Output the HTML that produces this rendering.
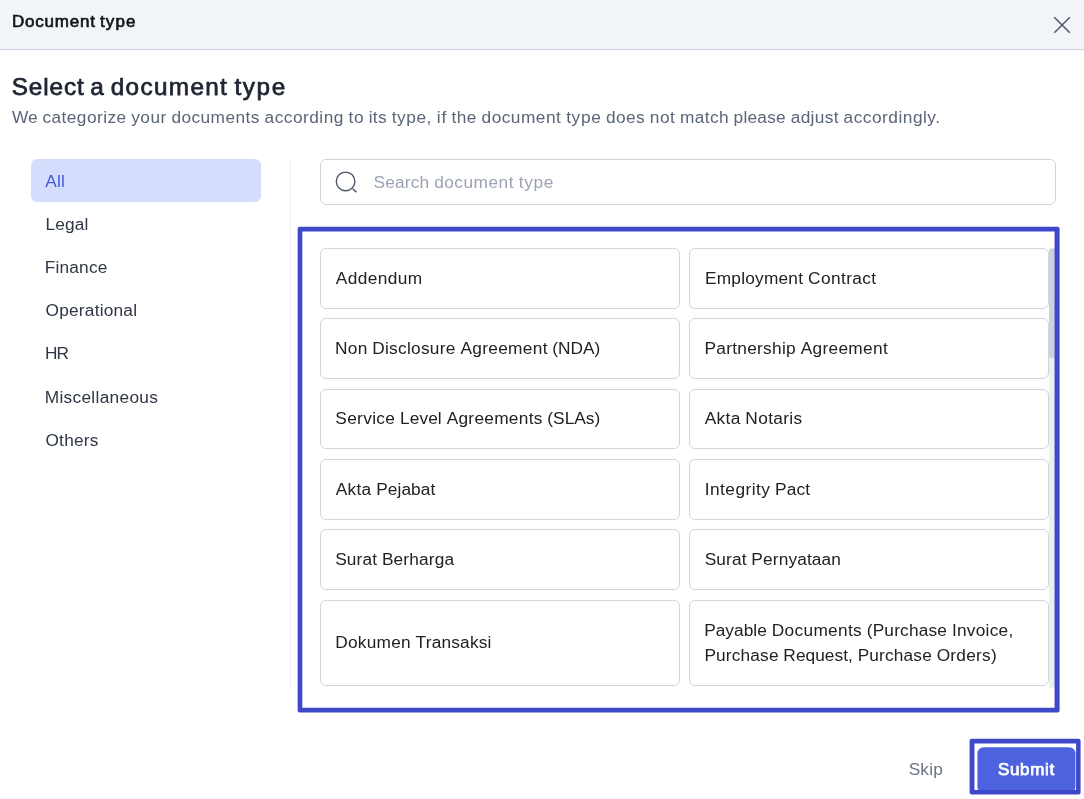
<!DOCTYPE html>
<html lang="en">
<head>
<meta charset="utf-8">
<title>Document type</title>
<style>
*{box-sizing:border-box;margin:0;padding:0}
html,body{width:1084px;height:799px;overflow:hidden;background:#fff}
body{position:relative;font-family:"Liberation Sans",sans-serif;font-size:16px;color:#2d3340}
.tx{position:absolute;left:0;width:1084px;height:24px;white-space:nowrap;line-height:24px;font-weight:400}
.tx span{position:absolute;top:0}
#root{position:absolute;left:0;top:0;width:1084px;height:799px;overflow:hidden;will-change:transform;background:#fff}
#hdr{position:absolute;left:0;top:0;width:1084px;height:50px;background:#f1f4f9;border-bottom:1px solid #cbd3df}
#close{position:absolute;left:1050px;top:13px;width:24px;height:24px}
#pill{position:absolute;left:31px;top:159px;width:230px;height:43px;border-radius:6px;background:#d5ddfc}
#vline{position:absolute;left:290px;top:159px;width:1px;height:530px;background:#eceff3}
#search{position:absolute;left:320px;top:159px;width:736px;height:46px;border:1px solid #ced5df;border-radius:6px;background:#fff}
#sicon{position:absolute;left:333px;top:169px}
.card{position:absolute;width:360px;border:1px solid #d0d6e0;border-radius:6px;background:#fff}
.c1{left:320px}.c2{left:689px}
.ov{position:absolute;left:0;top:0;pointer-events:none}
</style>
</head>
<body>
<div id="root">
<div id="hdr"></div>
<div class="tx" style="top:9.50px;font-size:17.0px;color:#151517;-webkit-text-stroke:0.65px #151517"><span style="left:12.02px;letter-spacing:0.768px">Document</span> <span style="left:100.04px;letter-spacing:1.105px">type</span></div>
<svg id="close" viewBox="0 0 24 24"><path d="M4.3 4.3 L19.8 19.7 M19.8 4.3 L4.3 19.7" stroke="#505a69" stroke-width="1.55" fill="none"/></svg>
<h1 class="tx" style="top:74.50px;font-size:24.3px;color:#1f2533;-webkit-text-stroke:0.75px #1f2533"><span style="left:11.71px;letter-spacing:0.891px">Select</span> <span style="left:90.35px;letter-spacing:0.297px">a</span> <span style="left:110.75px;letter-spacing:1.344px">document</span> <span style="left:234.40px;letter-spacing:1.613px">type</span></h1>
<p class="tx" style="top:105.00px;font-size:17.3px;color:#5a6577"><span style="left:11.99px;letter-spacing:-0.078px">We</span> <span style="left:42.45px;letter-spacing:0.436px">categorize</span> <span style="left:131.28px;letter-spacing:0.445px">your</span> <span style="left:171.42px;letter-spacing:0.432px">documents</span> <span style="left:264.61px;letter-spacing:0.479px">according</span> <span style="left:348.60px;letter-spacing:0.484px">to</span> <span style="left:368.64px;letter-spacing:0.323px">its</span> <span style="left:391.74px;letter-spacing:0.537px">type,</span> <span style="left:436.77px;letter-spacing:0.820px">if</span> <span style="left:451.57px;letter-spacing:0.391px">the</span> <span style="left:481.55px;letter-spacing:0.480px">document</span> <span style="left:566.13px;letter-spacing:0.660px">type</span> <span style="left:606.03px;letter-spacing:0.375px">does</span> <span style="left:649.80px;letter-spacing:0.479px">not</span> <span style="left:679.96px;letter-spacing:0.381px">match</span> <span style="left:733.59px;letter-spacing:0.237px">please</span> <span style="left:790.72px;letter-spacing:0.320px">adjust</span> <span style="left:843.59px;letter-spacing:0.499px">accordingly.</span></p>
<div id="pill"></div>
<div class="tx" style="top:169.00px;font-size:17.3px;color:#4459d8"><span style="left:45.32px;letter-spacing:0.167px">All</span></div>
<div class="tx" style="top:212.00px;font-size:17.3px;color:#2f3644"><span style="left:45.48px;letter-spacing:0.153px">Legal</span></div>
<div class="tx" style="top:255.00px;font-size:17.3px;color:#2f3644"><span style="left:44.87px;letter-spacing:0.158px">Finance</span></div>
<div class="tx" style="top:298.00px;font-size:17.3px;color:#2f3644"><span style="left:45.56px;letter-spacing:0.210px">Operational</span></div>
<div class="tx" style="top:341.00px;font-size:17.3px;color:#2f3644"><span style="left:44.88px;letter-spacing:-0.844px">HR</span></div>
<div class="tx" style="top:385.00px;font-size:17.3px;color:#2f3644"><span style="left:44.69px;letter-spacing:0.310px">Miscellaneous</span></div>
<div class="tx" style="top:428.00px;font-size:17.3px;color:#2f3644"><span style="left:45.45px;letter-spacing:0.224px">Others</span></div>
<div id="vline"></div>
<div id="search"></div>
<svg id="sicon" width="32" height="28" viewBox="0 0 32 28"><circle cx="12.6" cy="12.4" r="9.3" fill="none" stroke="#4b5565" stroke-width="1.4"/><path d="M19.7 19.8 L23.5 23.3" stroke="#4b5565" stroke-width="1.5" fill="none"/></svg>
<div class="tx" style="top:170.00px;font-size:17.3px;color:#9aa3b3"><span style="left:373.62px;letter-spacing:0.154px">Search</span> <span style="left:434.20px;letter-spacing:0.480px">document</span> <span style="left:518.78px;letter-spacing:0.660px">type</span></div>
<div class="card c1" style="top:248px;height:61px"></div><div class="card c2" style="top:248px;height:61px"></div><div class="card c1" style="top:318px;height:61px"></div><div class="card c2" style="top:318px;height:61px"></div><div class="card c1" style="top:389px;height:60px"></div><div class="card c2" style="top:389px;height:60px"></div><div class="card c1" style="top:459px;height:61px"></div><div class="card c2" style="top:459px;height:61px"></div><div class="card c1" style="top:529px;height:61px"></div><div class="card c2" style="top:529px;height:61px"></div><div class="card c1" style="top:600px;height:86px"></div><div class="card c2" style="top:600px;height:86px"></div>
<div class="tx" style="top:266.00px;font-size:17.3px;color:#222222"><span style="left:335.75px;letter-spacing:0.393px">Addendum</span></div><div class="tx" style="top:266.00px;font-size:17.3px;color:#222222"><span style="left:705.03px;letter-spacing:0.214px">Employment</span> <span style="left:808.04px;letter-spacing:0.404px">Contract</span></div><div class="tx" style="top:336.00px;font-size:17.3px;color:#222222"><span style="left:334.94px;letter-spacing:0.307px">Non</span> <span style="left:372.28px;letter-spacing:0.269px">Disclosure</span> <span style="left:460.40px;letter-spacing:0.314px">Agreement</span> <span style="left:552.35px;letter-spacing:0.000px">(NDA)</span></div><div class="tx" style="top:336.00px;font-size:17.3px;color:#222222"><span style="left:704.56px;letter-spacing:0.271px">Partnership</span> <span style="left:800.67px;letter-spacing:0.314px">Agreement</span></div><div class="tx" style="top:406.00px;font-size:17.3px;color:#222222"><span style="left:335.30px;letter-spacing:0.339px">Service</span> <span style="left:399.93px;letter-spacing:0.116px">Level</span> <span style="left:446.65px;letter-spacing:0.287px">Agreements</span> <span style="left:547.32px;letter-spacing:0.018px">(SLAs)</span></div><div class="tx" style="top:406.00px;font-size:17.3px;color:#222222"><span style="left:704.79px;letter-spacing:0.301px">Akta</span> <span style="left:745.35px;letter-spacing:0.350px">Notaris</span></div><div class="tx" style="top:477.00px;font-size:17.3px;color:#222222"><span style="left:335.73px;letter-spacing:0.301px">Akta</span> <span style="left:376.16px;letter-spacing:0.092px">Pejabat</span></div><div class="tx" style="top:477.00px;font-size:17.3px;color:#222222"><span style="left:704.73px;letter-spacing:0.470px">Integrity</span> <span style="left:775.03px;letter-spacing:0.156px">Pact</span></div><div class="tx" style="top:547.00px;font-size:17.3px;color:#222222"><span style="left:335.22px;letter-spacing:0.122px">Surat</span> <span style="left:381.90px;letter-spacing:0.170px">Berharga</span></div><div class="tx" style="top:547.00px;font-size:17.3px;color:#222222"><span style="left:704.68px;letter-spacing:0.122px">Surat</span> <span style="left:751.34px;letter-spacing:0.138px">Pernyataan</span></div><div class="tx" style="top:630.00px;font-size:17.3px;color:#222222"><span style="left:335.19px;letter-spacing:0.250px">Dokumen</span> <span style="left:415.62px;letter-spacing:0.188px">Transaksi</span></div><div class="tx" style="top:618.00px;font-size:17.3px;color:#222222"><span style="left:704.14px;letter-spacing:0.049px">Payable</span> <span style="left:771.81px;letter-spacing:0.318px">Documents</span> <span style="left:866.74px;letter-spacing:0.179px">(Purchase</span> <span style="left:951.89px;letter-spacing:0.258px">Invoice,</span></div><div class="tx" style="top:643.00px;font-size:17.3px;color:#222222"><span style="left:704.41px;letter-spacing:0.156px">Purchase</span> <span style="left:783.36px;letter-spacing:0.043px">Request,</span> <span style="left:857.66px;letter-spacing:0.156px">Purchase</span> <span style="left:936.70px;letter-spacing:0.237px">Orders)</span></div>
<svg class="ov" width="1084" height="799" viewBox="0 0 1084 799">
<path d="M1049 248.4 H1058 V688.2 H1051 Q1049 688.2 1049 686.2 Z" fill="#eceff2"/>
<rect x="1049" y="248.4" width="9" height="109.8" rx="3" fill="#cdd3dc"/>
<path fill-rule="evenodd" fill="#4048ca" d="M299.64 226.7 H1057.6 Q1059.6 226.7 1059.6 228.7 V710.46 Q1059.6 712.46 1057.6 712.46 H299.64 Q297.64 712.46 297.64 710.46 V228.7 Q297.64 226.7 299.64 226.7 Z M302.33 231.4 V707.65 H1054.55 V231.4 Z"/>
</svg>
<div class="tx" style="top:757.00px;font-size:17.3px;color:#6b7483"><span style="left:908.64px;letter-spacing:0.176px">Skip</span></div>
<svg class="ov" width="1084" height="799" viewBox="0 0 1084 799"><rect x="977.4" y="747.2" width="98.05" height="46.2" rx="6.3" fill="#4c62de"/></svg>
<div class="tx" style="top:757.50px;font-size:17.0px;color:#ffffff;-webkit-text-stroke:0.75px #ffffff"><span style="left:997.90px;letter-spacing:0.695px">Submit</span></div>
<svg class="ov" width="1084" height="799" viewBox="0 0 1084 799"><path fill-rule="evenodd" fill="#4048ca" d="M971.58 738.64 H1078.58 Q1080.58 738.64 1080.58 740.64 V792.5 Q1080.58 794.5 1078.58 794.5 H971.58 Q969.58 794.5 969.58 792.5 V740.64 Q969.58 738.64 971.58 738.64 Z M974.46 743.52 V789.9 H1076.08 V743.52 Z"/></svg>
</div>
</body>
</html>
